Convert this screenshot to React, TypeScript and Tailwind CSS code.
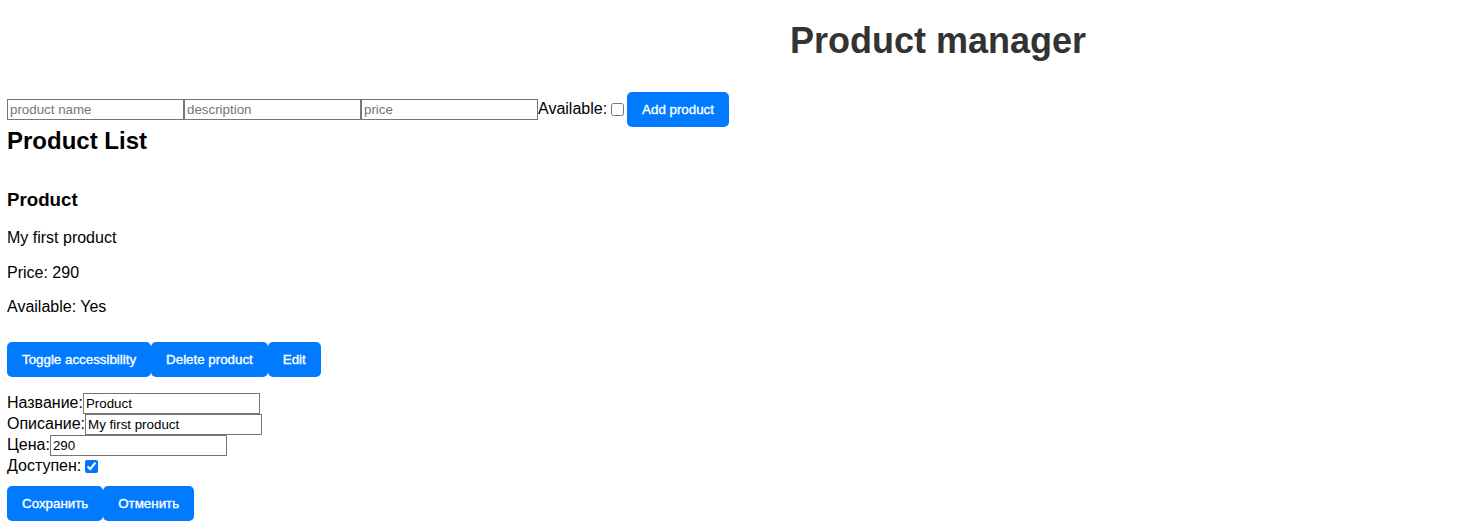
import React, { useState } from "react";

type Product = {
  name: string;
  description: string;
  price: number;
  available: boolean;
};

const btn =
  "bg-[#007bff] text-white rounded-[5px] px-[15px] py-[10px] text-[13.33px] leading-[15px] font-normal [-webkit-text-stroke:0.35px_white] whitespace-nowrap";
const field =
  "w-[177px] h-[21px] border border-[#767676] px-[2px] py-[1px] text-[13.33px] leading-[15px] text-black placeholder:text-[#757575] bg-white";

export default function App() {
  const [product] = useState<Product>({
    name: "Product",
    description: "My first product",
    price: 290,
    available: true,
  });

  return (
    <div className="min-h-screen bg-white pl-[7px] font-['Liberation_Sans',Arial,sans-serif] text-black text-[16px] leading-[18.4px]">
      {/* Title */}
      <h1 className="pt-[20px] pl-[389px] text-center text-[36px] leading-[41px] font-bold text-[#333333]">
        Product manager
      </h1>

      {/* Add form */}
      <div className="mt-[31px] flex items-center h-[35px]">
        <input className={field} placeholder="product name" />
        <input className={field} placeholder="description" />
        <input className={field} placeholder="price" />
        <span>Available:</span>
        <input type="checkbox" className="ml-[4px] mr-[3px] w-[13px] h-[13px]" />
        <button className={btn}>Add product</button>
      </div>

      <h2 className="text-[24px] leading-[28px] font-bold">Product List</h2>

      {/* Product card */}
      <h3 className="mt-[34px] text-[18.72px] leading-[21.5px] font-bold">{product.name}</h3>
      <p className="mt-[18.8px]">{product.description}</p>
      <p className="mt-[16px]">Price: {product.price}</p>
      <p className="mt-[16px]">Available: {product.available ? "Yes" : "No"}</p>

      <div className="mt-[25.5px] flex">
        <button className={btn}>Toggle accessibility</button>
        <button className={btn}>Delete product</button>
        <button className={btn}>Edit</button>
      </div>

      {/* Edit form */}
      <div className="mt-[16px]">
        <div className="flex items-baseline h-[21px]">
          <span>Название:</span>
          <input className={field} defaultValue={product.name} />
        </div>
        <div className="flex items-baseline h-[21px]">
          <span>Описание:</span>
          <input className={field} defaultValue={product.description} />
        </div>
        <div className="flex items-baseline h-[21px]">
          <span>Цена:</span>
          <input className={field} defaultValue={String(product.price)} />
        </div>
        <div className="flex items-center h-[21px]">
          <span>Доступен:</span>
          <input
            type="checkbox"
            defaultChecked={product.available}
            className="ml-[4px] w-[13px] h-[13px] accent-[#0075ff]"
          />
        </div>
        <div className="mt-[9px] flex">
          <button className={btn}>Сохранить</button>
          <button className={btn}>Отменить</button>
        </div>
      </div>
    </div>
  );
}
